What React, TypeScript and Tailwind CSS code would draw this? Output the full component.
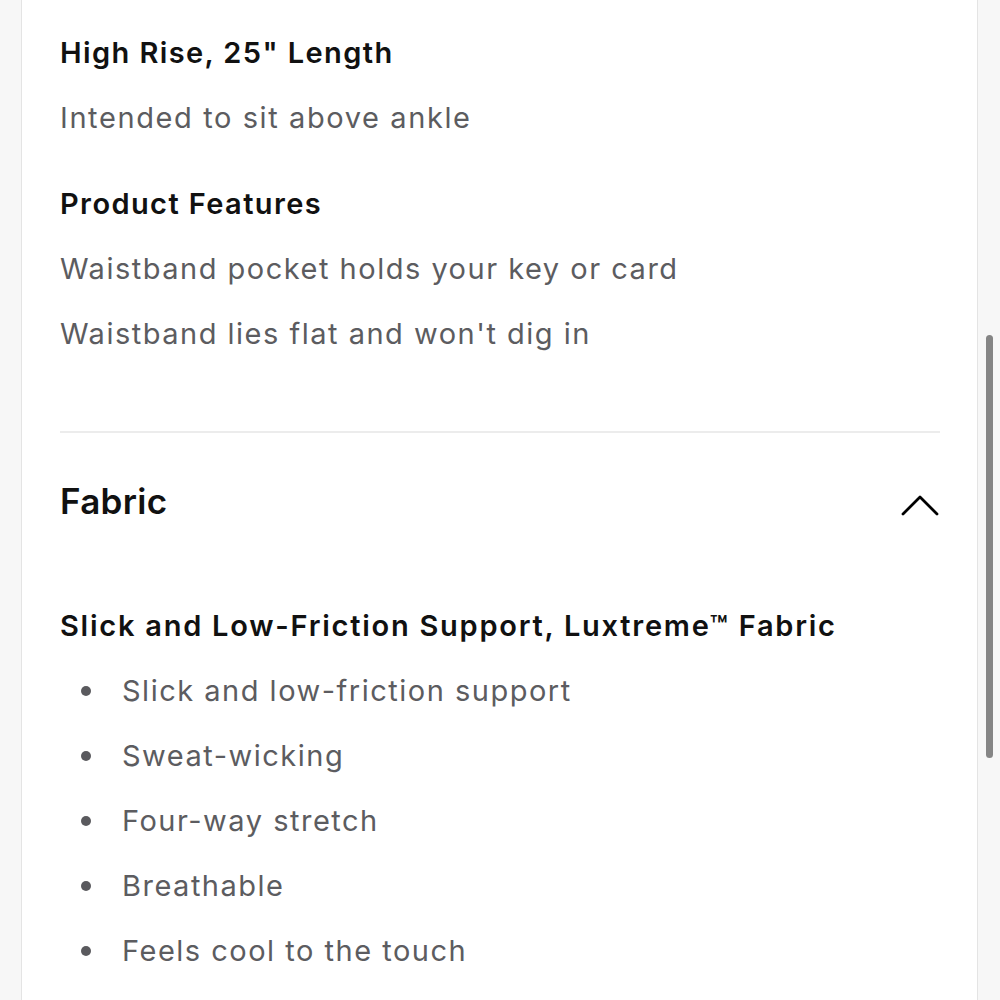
const features = ['Waistband pocket holds your key or card', "Waistband lies flat and won't dig in"];

const fabricPoints = [
  'Slick and low-friction support',
  'Sweat-wicking',
  'Four-way stretch',
  'Breathable',
  'Feels cool to the touch',
];

function App() {
  return (
    <div className="flex h-[1000px] w-[1000px] overflow-hidden bg-[#f7f7f7] font-['Inter',sans-serif]">
      {/* left gutter */}
      <div className="w-[22px] shrink-0 border-r border-[#e4e4e4] bg-[#f7f7f7]" />

      {/* main panel */}
      <div className="flex-1 bg-white pl-[38px] pr-[37px] pt-[20px]">
        <h3 className="h-[65px] text-[29px] font-semibold leading-[65px] tracking-[1.4px] text-[#111]">High Rise, 25" Length</h3>
        <p className="h-[65px] text-[29px] leading-[65px] tracking-[1.6px] text-[#5c5c60]">Intended to sit above ankle</p>

        <h3 className="mt-[21px] h-[65px] text-[29px] font-semibold leading-[65px] tracking-[1.4px] text-[#111]">Product Features</h3>
        {features.map((f) => (
          <p key={f} className="h-[65px] text-[29px] leading-[65px] tracking-[1.5px] text-[#5c5c60]">
            {f}
          </p>
        ))}

        <div className="mt-[65px] h-[2px] bg-[#ececec]" />

        <button className="flex h-[136px] w-full items-center justify-between">
          <span className="text-[35px] font-semibold tracking-[0.3px] text-[#111]">Fabric</span>
          <svg width="38" height="22" viewBox="0 0 38 22" fill="none" className="mr-[1px] mt-[8px]">
            <polyline points="2,20 19,3 36,20" stroke="#000" strokeWidth="2.8" strokeLinecap="round" strokeLinejoin="round" />
          </svg>
        </button>

        <h4 className="mt-[24px] h-[65px] text-[29px] font-semibold leading-[65px] tracking-[1.75px] text-[#111]">
          Slick and Low-Friction Support, Luxtreme™ Fabric
        </h4>
        <ul>
          {fabricPoints.map((p) => (
            <li key={p} className="flex h-[65px] items-center text-[29px] tracking-[1.5px] text-[#5c5c60]">
              <span className="ml-[21px] mr-[31px] h-[10px] w-[10px] rounded-full bg-[#5a5a5e]" />
              {p}
            </li>
          ))}
        </ul>
      </div>

      {/* right gutter with scrollbar */}
      <div className="w-[23px] shrink-0 border-l border-[#e4e4e4] bg-[#f7f7f7] pl-[8px] pt-[335px]">
        <div className="h-[423px] w-[7px] rounded-full bg-[#858585]" />
      </div>
    </div>
  );
}

export default App;
